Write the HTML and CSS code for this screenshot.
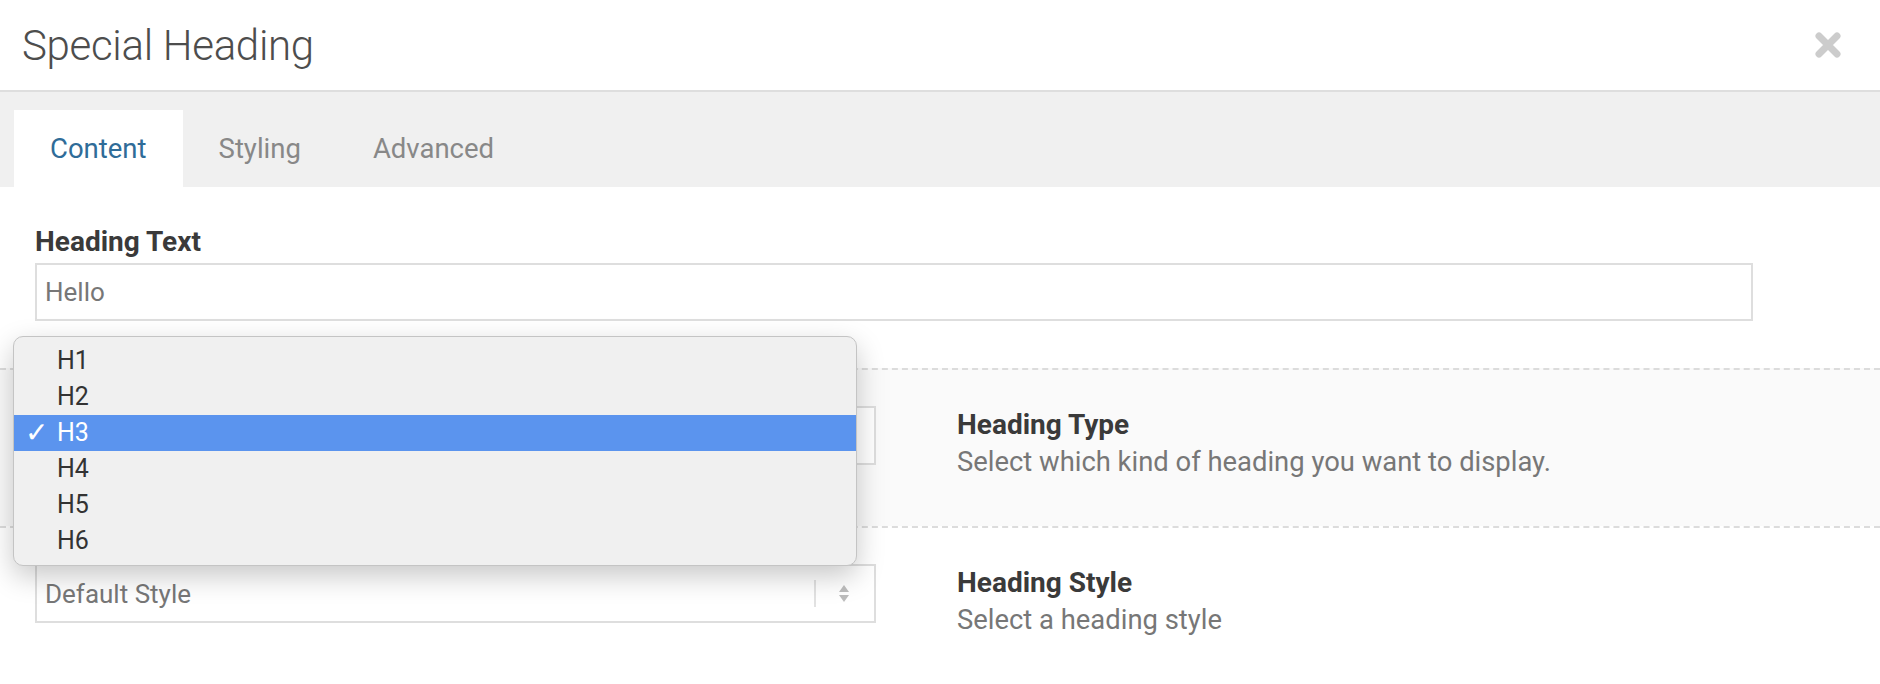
FILE: index.html
```html
<!DOCTYPE html>
<html lang="en">
<head>
    <meta charset="UTF-8">
    <title>Special Heading</title>
    <link rel="stylesheet" href="styles.css">
</head>
<body>
    <div class="modal">
        <div class="modal-header">
            <h1 class="modal-title">Special Heading</h1>
            <button class="close" aria-label="Close">
                <svg width="28" height="26" viewBox="0 0 28 26">
                    <path d="M5 4 L23 22 M23 4 L5 22" stroke="#cccccc" stroke-width="7" stroke-linecap="round"/>
                </svg>
            </button>
        </div>

        <div class="tabs">
            <div class="tab active">Content</div>
            <div class="tab">Styling</div>
            <div class="tab">Advanced</div>
        </div>

        <div class="tab-body">
            <div class="field">
                <label class="label">Heading Text</label>
                <input type="text" class="text-input" value="Hello">
            </div>

            <div class="option-row shaded">
                <!-- value is covered by the open popup -->
                <div class="select">
                    <span></span>
                    <span class="arrows"><i class="up"></i><i class="down"></i></span>
                </div>
                <div class="option-info">
                    <div class="label">Heading Type</div>
                    <div class="desc">Select which kind of heading you want to display.</div>
                </div>
            </div>

            <div class="option-row">
                <div class="select">
                    <span>Default Style</span>
                    <span class="arrows"><i class="up"></i><i class="down"></i></span>
                </div>
                <div class="option-info">
                    <div class="label">Heading Style</div>
                    <div class="desc">Select a heading style</div>
                </div>
            </div>
        </div>

        <ul class="popup">
            <li>H1</li>
            <li>H2</li>
            <li class="selected">H3</li>
            <li>H4</li>
            <li>H5</li>
            <li>H6</li>
        </ul>
    </div>
</body>
</html>
```

FILE: styles.css
```css
body {
    margin: 0;
    background-color: #fff;
    font-family: "Helvetica Neue", Roboto, Arial, sans-serif;
    color: #333;
}

.modal {
    position: relative;
    width: 1880px;
    height: 684px;
    overflow: hidden;
}

.modal-header {
    height: 90px;
    display: flex;
    align-items: center;
    justify-content: space-between;
    padding: 0 38px 0 22px;
    border-bottom: 2px solid #dedede;
}

.modal-title {
    margin: 0;
    font-size: 42px;
    font-weight: 300;
    color: #4d4d4d;
    letter-spacing: -0.3px;
}

.close {
    border: none;
    background: none;
    padding: 0;
    margin-top: 2px;
    cursor: pointer;
}

.tabs {
    display: flex;
    height: 95px;
    padding: 18px 0 0 14px;
    box-sizing: border-box;
    background-color: #f0f0f0;
}

.tab {
    display: flex;
    align-items: center;
    padding: 0 36px;
    font-size: 27.5px;
    color: #888;
}

.tab.active {
    background-color: #fff;
    color: #2f6c98;
}

.field {
    padding: 40px 35px 47px;
}

.label {
    display: block;
    font-size: 28px;
    font-weight: bold;
    color: #3a3a3a;
    line-height: 30px;
}

.text-input {
    display: block;
    width: 1718px;
    height: 58px;
    margin-top: 6px;
    box-sizing: border-box;
    border: 2px solid #dedede;
    padding: 0 8px;
    font-family: inherit;
    font-size: 26px;
    color: #777;
    background: #fff;
}

.option-row {
    display: flex;
    height: 158px;
    box-sizing: border-box;
    padding: 36px 35px 0;
    border-top: 2px dashed #dcdcdc;
}

.option-row.shaded {
    background-color: #fafafa;
}

.select {
    width: 841px;
    height: 59px;
    box-sizing: border-box;
    border: 2px solid #dedede;
    background: #fff;
    display: flex;
    align-items: center;
    justify-content: space-between;
    padding-left: 8px;
    font-size: 26px;
    color: #777;
}

.arrows {
    display: flex;
    flex-direction: column;
    align-items: center;
    gap: 3px;
    width: 56px;
    height: 27px;
    justify-content: center;
    border-left: 2px solid #e2e2e2;
    margin-right: 2px;
}

.arrows i {
    width: 0;
    height: 0;
    border-left: 5px solid transparent;
    border-right: 5px solid transparent;
}

.arrows .up {
    border-bottom: 7px solid #bdbdbd;
}

.arrows .down {
    border-top: 7px solid #bdbdbd;
}

.option-info {
    margin-left: 81px;
    padding-top: 4px;
}

.option-info .desc {
    margin-top: 7px;
    font-size: 27.4px;
    color: #777;
    line-height: 30px;
}

.popup {
    position: absolute;
    left: 13px;
    top: 336px;
    width: 844px;
    height: 230px;
    box-sizing: border-box;
    margin: 0;
    padding: 6px 0 0;
    list-style: none;
    background-color: #f0f0f0;
    border: 1px solid #c4c4c4;
    border-radius: 10px;
    box-shadow: 0 10px 28px rgba(0, 0, 0, 0.22);
}

.popup li {
    height: 36px;
    line-height: 36px;
    padding-left: 43px;
    font-size: 25px;
    color: #333;
}

.popup li.selected {
    display: flex;
    padding-left: 11px;
    background-color: #5b94ee;
    color: #fff;
}

.popup li.selected::before {
    content: "\2713";
    width: 32px;
    font-size: 28px;
}
```
